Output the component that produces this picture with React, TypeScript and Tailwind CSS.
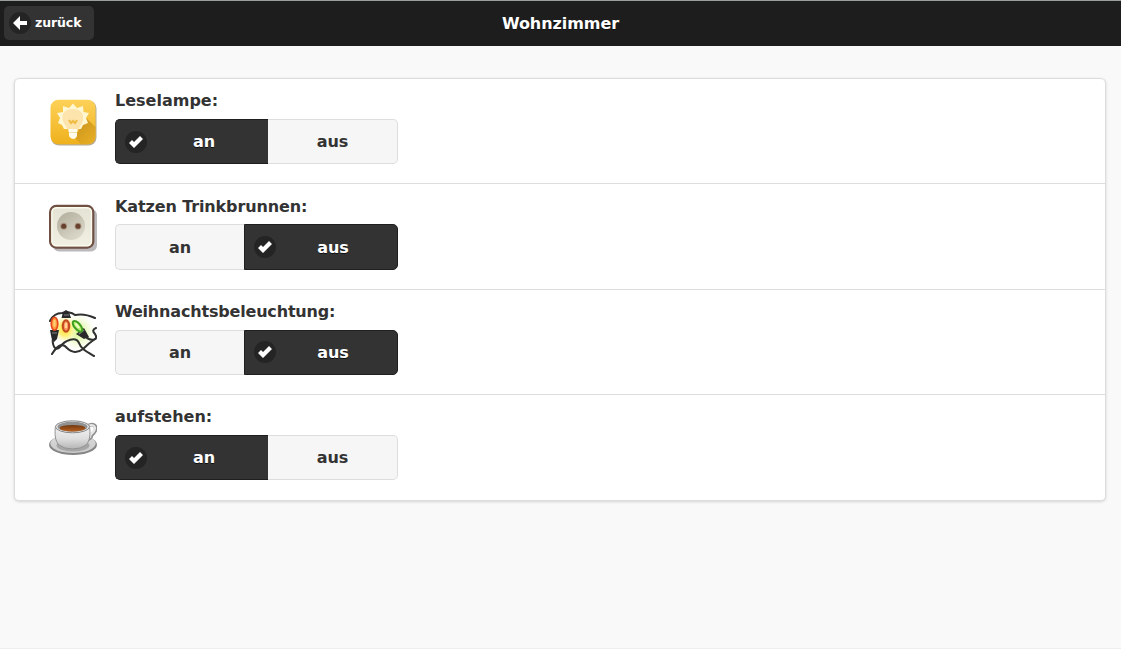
import React from "react";

function LampIcon() {
  return (
    <svg width="48" height="48" viewBox="0 0 48 48">
      <defs>
        <linearGradient id="lampBg" x1="0" y1="0" x2="0" y2="1">
          <stop offset="0" stopColor="#fdd158" />
          <stop offset="1" stopColor="#efb11c" />
        </linearGradient>
        <linearGradient id="lampShade" x1="0.3" y1="0.2" x2="0.8" y2="1">
          <stop offset="0" stopColor="#c9921a" />
          <stop offset="1" stopColor="#e5ac24" />
        </linearGradient>
        <filter id="lampSoft"><feGaussianBlur stdDeviation="0.6" /></filter>
      </defs>
      <g className="blur-[0.4px]">
        <rect x="2" y="1.5" width="45.5" height="45" rx="8" fill="#b8ad96" />
        <rect x="1.5" y="0.7" width="45" height="44.6" rx="8" fill="url(#lampBg)" />
        <path d="M36 18 46.500 28V37Q46.500 45.300 38.500 45.300H32L26 39Z" fill="url(#lampShade)" opacity="0.85" />
      </g>
      <path d="M24 4.500 28 9 34 7 34.500 13 40 14 37 19 39 24 34 26 32 30H15L13 26 9 24 11 19 8 14 14 13 14 7 20 9Z" fill="#fff6d2" filter="url(#lampSoft)" />
      <path d="M24 10C15 10 12 16 14 22 16 27 19 29 19.500 33H28.500C29 29 33 26 34 21 35 14 31 10 24 10Z" fill="#fde3ac" filter="url(#lampSoft)" />
      <path d="m20 21 2 3 2-2 2 2 2-3" fill="none" stroke="#f0bd46" strokeWidth="2.200" />
      <g className="blur-[0.4px]">
        <path d="M20 30h8v6Q28 39 24.500 40 20 39 20 36Z" fill="#fffbed" />
        <path d="M20.500 33.500h7.500" stroke="#f0ddb0" />
      </g>
    </svg>
  );
}

function SocketIcon() {
  return (
    <svg className="blur-[0.3px]" width="48" height="48" viewBox="0 0 48 48">
      <defs>
        <linearGradient id="socketFace" x1="0" y1="0" x2="0" y2="1">
          <stop offset="0" stopColor="#e4e2d3" />
          <stop offset="1" stopColor="#f1f0e3" />
        </linearGradient>
        <linearGradient id="socketHole" x1="0.1" y1="0" x2="0.8" y2="1">
          <stop offset="0" stopColor="#b2ad9c" />
          <stop offset="1" stopColor="#dedbcd" />
        </linearGradient>
      </defs>
      <rect x="4" y="5" width="44" height="42.500" rx="6" fill="#bbb9bb" />
      <rect x="1.200" y="2" width="43" height="41.500" rx="6" fill="url(#socketFace)" stroke="#715044" strokeWidth="2.400" />
      <rect x="2.900" y="3.700" width="39.600" height="38.100" rx="4.500" fill="none" stroke="#fafaed" strokeWidth="1.400" />
      <circle cx="22" cy="22" r="14" fill="url(#socketHole)" />
      <circle cx="14.700" cy="22.200" r="3.400" fill="#a8947f" />
      <circle cx="29" cy="22.200" r="3.400" fill="#a8947f" />
      <circle cx="14.700" cy="22.200" r="2.500" fill="#68402f" />
      <circle cx="29" cy="22.200" r="2.500" fill="#68402f" />
    </svg>
  );
}

function LightsIcon() {
  return (
    <svg className="blur-[0.4px]" width="48" height="48" viewBox="0 0 48 48">
      <defs>
        <radialGradient id="glowYellow">
          <stop offset="0" stopColor="#ffe02c" />
          <stop offset="0.5" stopColor="#fff07a" />
          <stop offset="1" stopColor="#fff8c0" stopOpacity="0" />
        </radialGradient>
        <radialGradient id="glowGreen">
          <stop offset="0" stopColor="#d6f38c" />
          <stop offset="0.5" stopColor="#edfaca" />
          <stop offset="1" stopColor="#f3ffd5" stopOpacity="0" />
        </radialGradient>
      </defs>
      <ellipse cx="29" cy="22" rx="17" ry="18" fill="url(#glowGreen)" />
      <ellipse cx="16" cy="19" rx="12" ry="14" fill="url(#glowYellow)" />
      <g fill="none" stroke="#303230" strokeWidth="2.100" strokeLinecap="round">
        <path d="M1 11Q5 3 13 3C19 2 22 2 26 5Q35 3 46 8" />
        <path d="M47 18Q42 20 46 24C50 30 43 31 38 28" />
        <path d="M4 28C3 35 6 42 11 37C16 30 27 26 30 33C32 39 38 42 45 46" />
        <path d="M3 44C8 36 13 32 18 38C23 43 29 43 34 39Q40 33 46 29" />
      </g>
      <path d="M1 20 10 20 8 29 5 32 2.500 28Z M12.500 8 14 2 17 0 20 2 22 8Z M27 24 35 18 40 27 35 29Z" fill="#292929" />
      <path d="M3 23h5M15 5h5m10 19 5-4" stroke="#858585" strokeWidth="1.200" />
      <ellipse cx="5.500" cy="13.700" rx="3.300" ry="6.500" fill="#ff9c40" stroke="#e6481b" strokeWidth="1.600" />
      <path d="M5.500 10v6.500" stroke="#ffd77a" strokeWidth="2" />
      <ellipse cx="17" cy="16" rx="3.200" ry="5.600" fill="#ff9c62" stroke="#c44a22" strokeWidth="2.200" />
      <path d="M17 13v5" stroke="#ffe5a9" strokeWidth="1.500" />
      <ellipse cx="28.500" cy="16.300" rx="3" ry="6.500" transform="rotate(-40 28.500 16.300)" fill="#b8ee71" stroke="#3d9e20" strokeWidth="2" />
      <path d="m26.500 13.500 3.500 4.500" stroke="#efffc2" strokeWidth="2" />
    </svg>
  );
}

function CupIcon() {
  return (
    <svg className="blur-[0.4px]" width="48" height="48" viewBox="0 0 48 48">
      <defs>
        <linearGradient id="cupBody" x1="0" y1="0" x2="0" y2="1">
          <stop offset="0" stopColor="#f3f3f3" />
          <stop offset="0.55" stopColor="#dedede" />
          <stop offset="1" stopColor="#b5b5b5" />
        </linearGradient>
        <linearGradient id="saucer" x1="0" y1="0" x2="0" y2="1">
          <stop offset="0" stopColor="#ddd" />
          <stop offset="1" stopColor="#c8c8c8" />
        </linearGradient>
        <linearGradient id="coffee" x1="0" y1="0" x2="0" y2="1">
          <stop offset="0" stopColor="#703810" />
          <stop offset="1" stopColor="#b8601f" />
        </linearGradient>
      </defs>
      <ellipse cx="24" cy="29.700" rx="24" ry="10.300" fill="#858585" />
      <ellipse cx="24" cy="28.500" rx="22.700" ry="9.400" fill="url(#saucer)" />
      <ellipse cx="24" cy="30.500" rx="16.500" ry="6" fill="#a6a6a6" />
      <path d="M38 12C43 7 49 11 46 16C44 20 42 19 42 22Q40 25 36 24" fill="none" stroke="#909090" strokeWidth="3.800" />
      <path d="M38 12C43 8 48 11 45 16C43 19 41 19 41 22Q39 24 36 23" fill="none" stroke="#e8e8e8" strokeWidth="2.300" />
      <path d="M6.500 11C5.500 19 6 26 10 30Q15 34 23.500 34Q32 34 37 30C41 26 41.500 19 40.500 11Z" fill="url(#cupBody)" stroke="#929292" strokeWidth="1" />
      <ellipse cx="23.500" cy="11.800" rx="17" ry="6" fill="#e9e9e9" stroke="#888" strokeWidth="1" />
      <ellipse cx="23.500" cy="11.800" rx="15" ry="5" fill="#909090" />
      <ellipse cx="23.500" cy="13.200" rx="12.800" ry="3.300" fill="url(#coffee)" />
    </svg>
  );
}

function CheckMark() {
  return (
    <span className="absolute left-[9px] top-1/2 -mt-[11px] flex size-[22px] items-center justify-center rounded-full bg-[#242424]">
      <svg width="14" height="14" viewBox="0 0 14 14">
        <path fill="#fff" d="M14 4 11 1 5 7 3 5 0 8l5 5z" />
      </svg>
    </span>
  );
}

type State = "an" | "aus";

function Choice({ name, active, onSelect }: { name: State; active: boolean; onSelect: () => void }) {
  const corners = name === "an" ? "rounded-l-[5px]" : "rounded-r-[5px]";
  const width = name === "an" ? (active ? "w-[153px]" : "w-[129px]") : active ? "w-[154px]" : "w-[130px]";
  const edge = name === "an" ? "border-r-0" : active ? "" : "border-l-0";
  const tone = active
    ? "border-[#1f1f1f] bg-[#333] pl-[40px] pr-4 text-white [text-shadow:0_1px_0_#111]"
    : "border-[#ddd] bg-[#f6f6f6] px-4 text-[#333] [text-shadow:0_1px_0_#f3f3f3]";
  return (
    <button onClick={onSelect} className={`relative h-full border pt-[2px] text-center font-bold ${corners} ${width} ${edge} ${tone}`}>
      {active && <CheckMark />}
      {name}
    </button>
  );
}

const devices: { label: string; tracking: string; icon: React.ReactNode; state: State }[] = [
  { label: "Leselampe:", tracking: "", icon: <LampIcon />, state: "an" },
  { label: "Katzen Trinkbrunnen:", tracking: "tracking-[-0.12px]", icon: <SocketIcon />, state: "aus" },
  { label: "Weihnachtsbeleuchtung:", tracking: "tracking-[-0.18px]", icon: <LightsIcon />, state: "aus" },
  { label: "aufstehen:", tracking: "", icon: <CupIcon />, state: "an" },
];

export default function App() {
  const [states, setStates] = React.useState<State[]>(devices.map((d) => d.state));
  const select = (index: number, value: State) => setStates(states.map((s, i) => (i === index ? value : s)));

  return (
    <div className="flex h-[649px] flex-col border-b border-[#eee] bg-[#f9f9f9] font-['DejaVu_Sans',sans-serif] text-base leading-[20.8px] text-[#333]">
      <header className="grid h-[46px] shrink-0 grid-cols-[1fr_auto_1fr] items-center border-t border-[#999e9b] bg-[#1d1d1d] text-white [text-shadow:0_1px_0_#111]">
        <button className="mb-px ml-1 flex h-[34px] w-[90px] items-center rounded-[5px] bg-[#333] pl-[5px] text-[12.5px] font-bold">
          <span className="mr-1 flex size-[22px] items-center justify-center rounded-full bg-[#242424]">
            <svg width="14" height="14" viewBox="0 0 14 14">
              <path fill="#fff" d="M7 0v5h7v4H7v5L0 7z" />
            </svg>
          </span>
          <span className="tracking-[-0.1px]">zurück</span>
        </button>
        <h1 className="pt-px font-bold tracking-[-0.05px]">Wohnzimmer</h1>
      </header>
      <ul className="ml-[14px] mr-[15px] mt-8 h-[423px] rounded-[5px] border border-t-0 border-[#ddd] bg-white shadow-[0_1px_3px_rgba(0,0,0,0.15)]">
        {devices.map((device, index) => (
          <li key={device.label} className="flex h-[105.35px] border-t border-[#ddd] pl-[34px] first:rounded-t-[5px]">
            <div className="mt-5 size-12">{device.icon}</div>
            <div className="ml-[18px] pt-[12.3px]">
              <div className={`font-bold ${device.tracking}`}>{device.label}</div>
              <div className="mt-[6.9px] flex h-[45.2px]">
                <Choice name="an" active={states[index] === "an"} onSelect={() => select(index, "an")} />
                <Choice name="aus" active={states[index] === "aus"} onSelect={() => select(index, "aus")} />
              </div>
            </div>
          </li>
        ))}
      </ul>
    </div>
  );
}
